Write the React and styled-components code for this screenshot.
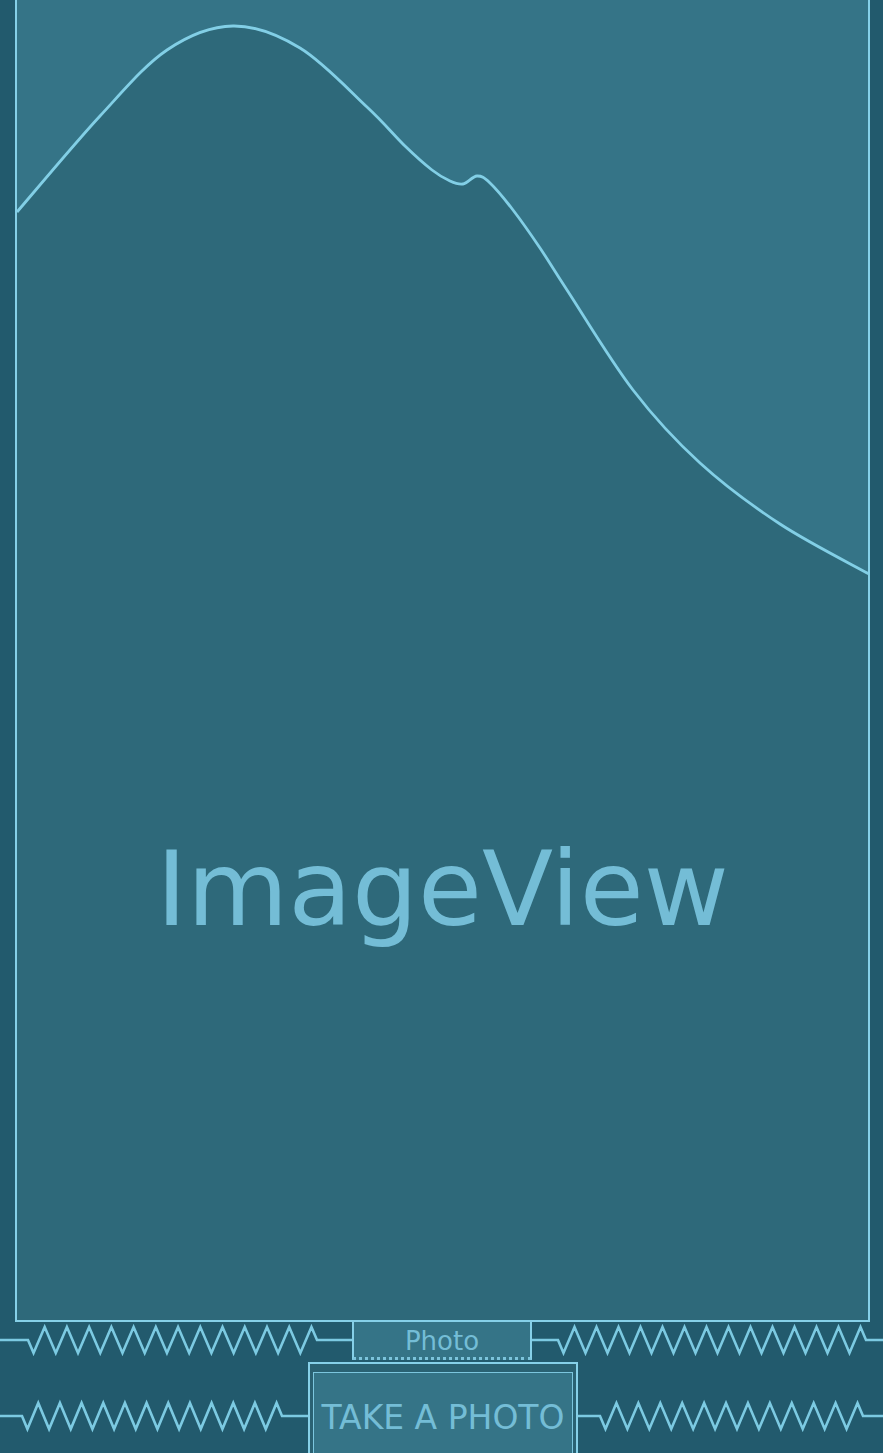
import React from 'react';
import styled, { createGlobalStyle } from 'styled-components';

const GlobalStyle = createGlobalStyle`
  html, body { margin: 0; padding: 0; background: #225a6d; }
  * { box-sizing: border-box; }
`;

const LINE = '#86d0e8';
const TEXT = '#74bdd6';

const Page = styled.div`
  width: 883px;
  height: 1453px;
  overflow: hidden;
  background: #225a6d;
  display: flex;
  flex-direction: column;
  font-family: "DejaVu Sans", "Liberation Sans", sans-serif;
`;

const ImageView = styled.div`
  position: relative;
  margin-left: 15px;
  width: 855px;
  height: 1322px;
  flex-shrink: 0;
  border: 2px solid ${LINE};
  border-top: none;
  background: #2e697a;
  display: flex;
  justify-content: center;
  overflow: hidden;
`;

const Picture = styled.svg`
  position: absolute;
  inset: 0;
  width: 100%;
  height: 100%;
`;

const ViewLabel = styled.div`
  position: relative;
  margin-top: 837px;
  font-size: 104px;
  line-height: 104px;
  height: 104px;
  color: ${TEXT};
`;

const Row = styled.div`
  display: flex;
  height: ${p => p.$h}px;
  margin-top: ${p => p.$gap || 0}px;
  flex-shrink: 0;
`;

const SpringBox = styled.svg`
  width: ${p => p.$w}px;
  height: 100%;
  flex-shrink: 0;
  display: block;
`;

const PhotoLabel = styled.div`
  width: 180px;
  height: 38px;
  flex-shrink: 0;
  border-left: 2px solid ${LINE};
  border-right: 2px solid ${LINE};
  border-bottom: 3px dotted #7cc4dc;
  background: #357487;
  color: ${TEXT};
  font-size: 26px;
  line-height: 26px;
  padding-top: 6px;
  text-align: center;
`;

const Button = styled.div`
  width: 270px;
  height: 108px;
  flex-shrink: 0;
  border: 2px solid ${LINE};
  background: #2a6273;
  padding: 8px 3px 0 3px;
  display: flex;
`;

const ButtonFace = styled.div`
  flex: 1;
  border: 1px solid #7cc6de;
  border-bottom: none;
  background: #357487;
  color: ${TEXT};
  font-size: 33px;
  line-height: 33px;
  padding-top: 28px;
  text-align: center;
  white-space: nowrap;
`;

// traced from the preview picture
const curvePoints = [
  [17, 212], [100, 116], [167, 50], [233, 26], [300, 48], [367, 107],
  [405, 146], [432, 170], [450, 181], [463, 184], [477, 176], [490, 183],
  [513, 210], [540, 248], [567, 290], [633, 390],
  [700, 463], [780, 524], [869, 574],
];

function smoothPath(pts) {
  let d = `M${pts[0][0]},${pts[0][1]}`;
  for (let i = 0; i < pts.length - 1; i++) {
    const p0 = pts[i - 1] || pts[i];
    const p1 = pts[i];
    const p2 = pts[i + 1];
    const p3 = pts[i + 2] || p2;
    const c1 = [p1[0] + (p2[0] - p0[0]) / 6, p1[1] + (p2[1] - p0[1]) / 6];
    const c2 = [p2[0] - (p3[0] - p1[0]) / 6, p2[1] - (p3[1] - p1[1]) / 6];
    d += ` C${c1[0]},${c1[1]} ${c2[0]},${c2[1]} ${p2[0]},${p2[1]}`;
  }
  return d;
}

function Spring({ w, h, lead, end, n, cy, amp = 13 }) {
  const p = (end - lead) / n;
  let d = `M0,${cy} L${lead},${cy}`;
  for (let i = 0; i < n; i++) {
    d += ` L${lead + p * (i + 0.25)},${cy + amp} L${lead + p * (i + 0.75)},${cy - amp}`;
  }
  d += ` L${end},${cy} L${w},${cy}`;
  return (
    <SpringBox $w={w} viewBox={`0 0 ${w} ${h}`}>
      <path d={d} fill="none" stroke="#7ccae2" strokeWidth="2.6" strokeLinejoin="miter" />
    </SpringBox>
  );
}

export default function App() {
  const curve = smoothPath(curvePoints);
  return (
    <Page>
      <GlobalStyle />
      <ImageView>
        <Picture viewBox="17 0 851 1320" preserveAspectRatio="none">
          <path d={`${curve} L869,0 L17,0 Z`} fill="#357487" />
          <path d={curve} fill="none" stroke="#82cfe6" strokeWidth="2.8" />
        </Picture>
        <ViewLabel>ImageView</ViewLabel>
      </ImageView>

      <Row $h={38}>
        <Spring w={352} h={38} lead={28} end={317} n={13} cy={18} />
        <PhotoLabel>Photo</PhotoLabel>
        <Spring w={351} h={38} lead={26} end={334} n={14} cy={18} />
      </Row>

      <Row $h={108} $gap={2}>
        <Spring w={308} h={108} lead={22} end={282} n={12} cy={54} />
        <Button>
          <ButtonFace>TAKE A PHOTO</ButtonFace>
        </Button>
        <Spring w={305} h={108} lead={22} end={285} n={12} cy={54} />
      </Row>
    </Page>
  );
}
